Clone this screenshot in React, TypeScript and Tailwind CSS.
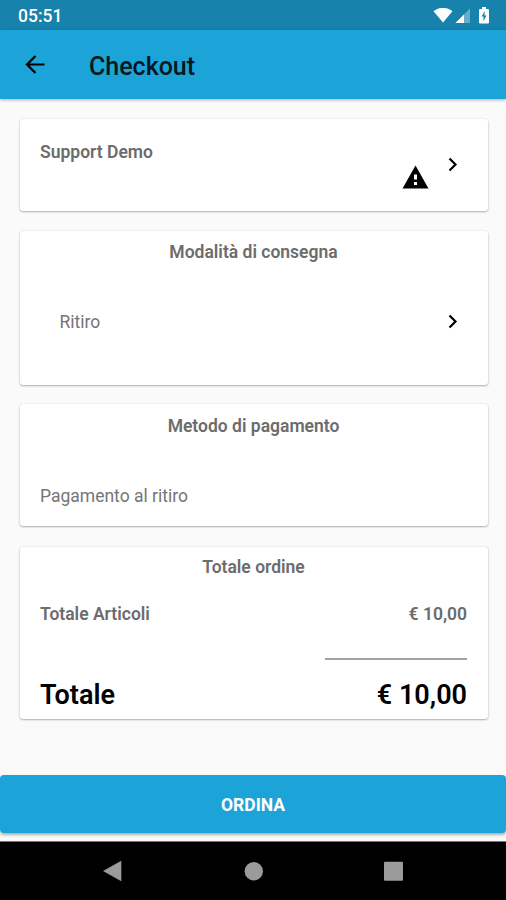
import type { ReactNode } from 'react';

const iconPaths = {
  back: 'M28.500 12.500H11M19.500 4L11 12.500l8.500 8.500',
  chevron: 'M1.5 1.5l6 6-6 6',
};

function Card({ className, children }: { className: string; children: ReactNode }) {
  return (
    <section className={`rounded-[3px] bg-white px-5 shadow-[0_1px_2px_rgba(0,0,0,0.28),0_0_2px_rgba(0,0,0,0.12)] ${className}`}>
      {children}
    </section>
  );
}

function CardTitle({ children }: { children: ReactNode }) {
  return <h2 className="pr-px text-center text-[17.5px] leading-6 font-semibold text-[#6c6c6c]">{children}</h2>;
}

function Chevron() {
  return (
    <svg width="10" height="15" viewBox="0 0 10 15" fill="none" stroke="#000" strokeWidth="2.2">
      <path d={iconPaths.chevron} />
    </svg>
  );
}

function StatusBar() {
  return (
    <div className="flex h-[30px] items-center justify-between bg-[#1782ab] pt-0.5 pr-4 pl-[18px] text-white">
      <span className="text-[17.5px] leading-6 font-medium">05:51</span>
      <div className="flex items-center">
        <svg width="20" height="16" viewBox="0 0 20 16" fill="#fff">
          <path d="M0.5 3.3C6-1.200 14-1.200 19.500 3.300L10 14.500z" />
        </svg>
        <svg className="ml-0.5" width="16" height="16" viewBox="0 0 16 16" fill="#fff">
          <path d="M15 0.500v14.500H0.500z" opacity=".35" />
          <path d="M9 6.500v8.500H0.500z" />
        </svg>
        <svg className="ml-[7px]" width="12" height="18" viewBox="0 0 12 18">
          <path d="M4 0h4v2h2a1 1 0 0 1 1 1v12.500a1 1 0 0 1-1 1H2a1 1 0 0 1-1-1V3a1 1 0 0 1 1-1h2z" fill="#fff" />
          <path d="M6.800 4L3.500 9.500h2V14L8.500 8.500h-2z" fill="#1782ab" />
        </svg>
      </div>
    </div>
  );
}

function NavBar() {
  return (
    <nav className="h-[59px] border-t border-[#777] bg-black">
      <svg width="506" height="58" viewBox="0 0 506 58" fill="#9b9b9b">
        <path d="M103 29l18.300-10.300v20.600z" />
        <circle cx="253.800" cy="29.200" r="9.200" />
        <rect x="384" y="19.800" width="19" height="19" rx="1" />
      </svg>
    </nav>
  );
}

export default function App() {
  return (
    <div className="flex h-[900px] w-[506px] flex-col overflow-hidden bg-[#fafafa] font-[Roboto,sans-serif]">
      <StatusBar />
      <header className="flex h-[69px] shrink-0 items-center bg-[#1ca4d8] pl-4 shadow-[0_1px_3px_rgba(0,0,0,0.3)]">
        <svg width="37" height="25" viewBox="0 0 37 25" fill="none" stroke="#000" strokeWidth="2.200">
          <path d={iconPaths.back} />
        </svg>
        <h1 className="ml-9 pt-1 text-[25px] leading-8 font-medium text-[#071820]">Checkout</h1>
      </header>

      <main className="flex-1 pt-5 pr-[18px] pl-5">
        <Card className="flex h-[92px] justify-between pt-5">
          <h2 className="pt-px text-[17.5px] leading-6 font-semibold text-[#6c6c6c]">Support Demo</h2>
          <div className="flex items-start pr-2.5">
            <svg className="mt-[26px] mr-[19px]" width="27" height="24" viewBox="0 0 27 24">
              <path d="M13.500 0.500L26.500 23.500H0.500z" fill="#000" />
              <path d="M12 9.500h3v5h-3zM12 17h3v3h-3z" fill="#fff" />
            </svg>
            <div className="mt-[18px]"><Chevron /></div>
          </div>
        </Card>

        <Card className="mt-5 h-[154px] pt-[9px]">
          <CardTitle>Modalità di consegna</CardTitle>
          <div className="mt-[45px] flex items-center justify-between pr-2.5 pl-[19.5px]">
            <span className="pt-px text-[17.5px] leading-6 text-[#757575]">Ritiro</span>
            <Chevron />
          </div>
        </Card>

        <Card className="mt-[19px] h-[122px] pt-2.5">
          <CardTitle>Metodo di pagamento</CardTitle>
          <p className="mt-[46px] text-[17.5px] leading-6 text-[#757575]">Pagamento al ritiro</p>
        </Card>

        <Card className="mt-[21px] h-[172px] pt-2">
          <CardTitle>Totale ordine</CardTitle>
          <div className="mt-[23px] flex justify-between pr-px text-[17.5px] leading-6 font-semibold text-[#6c6c6c]">
            <span>Totale Articoli</span>
            <span>€ 10,00</span>
          </div>
          <div className="mt-8 mr-px ml-auto h-0.5 w-[142px] bg-[#a3a3a3]" />
          <div className="mt-[19px] flex justify-between pr-px text-[27px] leading-8 font-semibold text-black">
            <span>Totale</span>
            <span>€ 10,00</span>
          </div>
        </Card>
      </main>

      <div className="h-[66px] bg-[#fafafa]">
        <button className="block h-[58px] w-full rounded-[4px] bg-[#1ca4d8] pt-[3px] text-[17.5px] font-bold text-white shadow-[0_2px_3px_rgba(0,0,0,0.3)]">
          ORDINA
        </button>
      </div>
      <NavBar />
    </div>
  );
}
